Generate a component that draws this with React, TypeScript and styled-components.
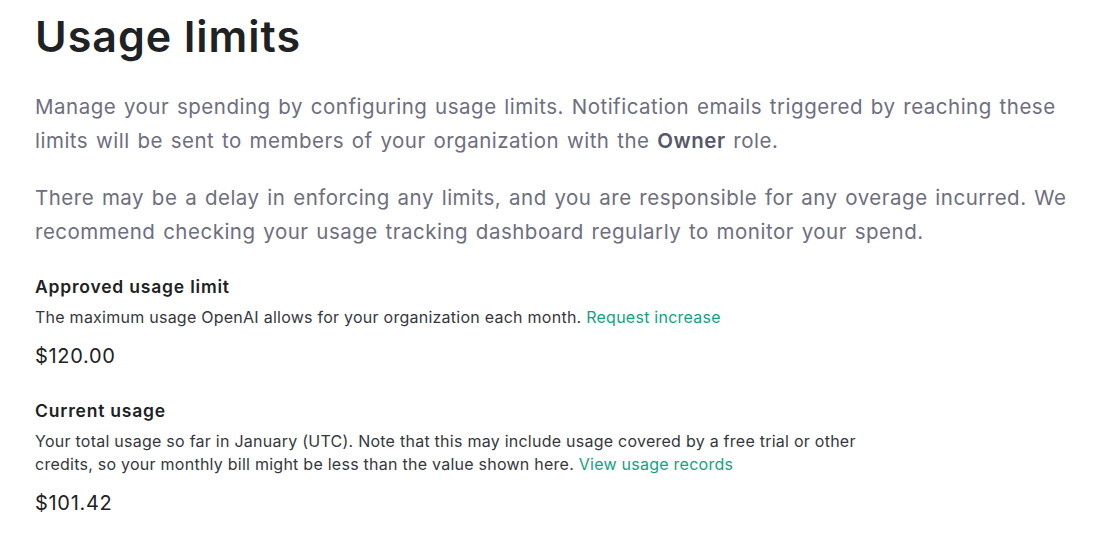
import React from "react";
import styled, { createGlobalStyle } from "styled-components";

const GlobalStyle = createGlobalStyle`
  body {
    margin: 0;
    background: #ffffff;
    font-family: Inter, "Noto Sans", sans-serif;
  }
`;

const Page = styled.div`
  padding: 10px 0 0 35px;
  width: 1080px;
  box-sizing: border-box;
`;

const Title = styled.h1`
  margin: 0;
  font-size: 43px;
  line-height: 52px;
  font-weight: 600;
  color: #202123;
  letter-spacing: 1px;
`;

const Lead = styled.p`
  margin: 0;
  max-width: 1045px;
  font-size: 20.5px;
  line-height: 34px;
  letter-spacing: 0.5px;
  word-spacing: 1.5px;
  color: #6e6e80;
  & + & {
    margin-top: 23px;
  }
  strong {
    font-weight: 600;
    color: #565869;
  }
`;

const Intro = styled.div`
  margin-top: 28px;
`;

const Section = styled.section`
  margin-top: 26px;
  & + & {
    margin-top: 29px;
  }
`;

const Heading = styled.h3`
  margin: 0;
  font-size: 17.5px;
  line-height: 24px;
  font-weight: 600;
  letter-spacing: 0.8px;
  color: #202123;
`;

const Description = styled.p`
  margin: 7px 0 0;
  max-width: 830px;
  font-size: 16px;
  line-height: 23px;
  letter-spacing: 0.25px;
  color: #353740;
`;

const Link = styled.a`
  color: #10a37f;
  text-decoration: none;
  cursor: pointer;
`;

const Amount = styled.div`
  margin-top: 13px;
  font-size: 20px;
  line-height: 28px;
  font-weight: 400;
  letter-spacing: 0.7px;
  color: #202123;
`;

const App: React.FC = () => {
  return (
    <>
      <GlobalStyle />
      <Page>
        <Title>Usage limits</Title>
        <Intro>
          <Lead>
            Manage your spending by configuring usage limits. Notification emails
            triggered by reaching these limits will be sent to members of your
            organization with the <strong>Owner</strong> role.
          </Lead>
          <Lead>
            There may be a delay in enforcing any limits, and you are responsible
            for any overage incurred. We recommend checking your usage tracking
            dashboard regularly to monitor your spend.
          </Lead>
        </Intro>
        <Section>
          <Heading>Approved usage limit</Heading>
          <Description>
            The maximum usage OpenAI allows for your organization each month.{" "}
            <Link>Request increase</Link>
          </Description>
          <Amount>$120.00</Amount>
        </Section>
        <Section>
          <Heading>Current usage</Heading>
          <Description>
            Your total usage so far in January (UTC). Note that this may include
            usage covered by a free trial or other credits, so your monthly bill
            might be less than the value shown here.{" "}
            <Link>View usage records</Link>
          </Description>
          <Amount>$101.42</Amount>
        </Section>
      </Page>
    </>
  );
};

export default App;
